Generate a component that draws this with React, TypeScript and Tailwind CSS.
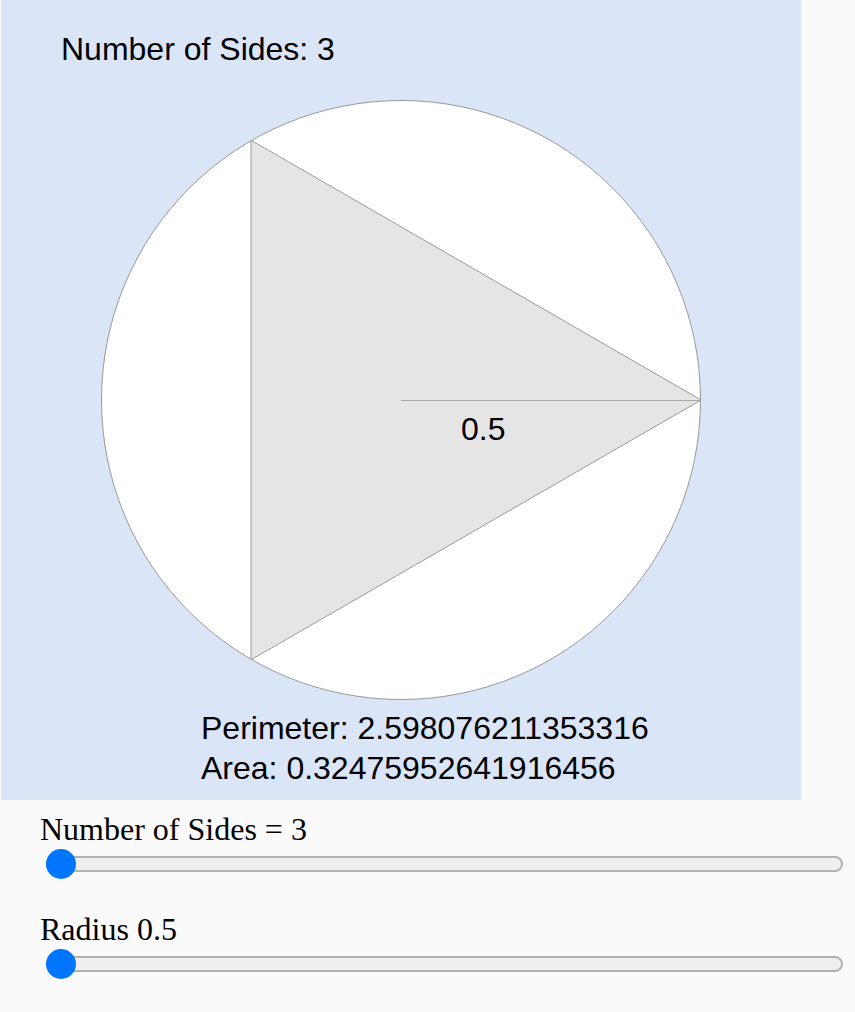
import React from 'react'

const sides = 3
const radius = 0.5
const scale = 600

const Slider: React.FC<{ label: string }> = ({ label }) => {
  return (
    <div className="mb-[32px]">
      <div className="h-[36px] text-[32px] leading-[36px] text-black">{label}</div>
      <div className="relative mt-[2px] flex h-[30px] w-[803px] items-center">
        <div className="ml-[6px] h-[16px] w-[797px] rounded-full border-2 border-[#b2b2b2] bg-[#efefef]" />
        <div className="absolute left-[6px] top-0 h-[30px] w-[30px] rounded-full bg-[#0075ff]" />
      </div>
    </div>
  )
}

export default function App() {
  const r = radius * scale
  const cx = 300
  const cy = 300
  const pts = Array.from({ length: sides }, (_, i) => {
    const a = (i * 2 * Math.PI) / sides
    return `${cx + r * Math.cos(a)},${cy - r * Math.sin(a)}`
  }).join(' ')

  // values as printed by the original page
  const perimeter = '2.598076211353316'
  const area = '0.32475952641916456'

  return (
    <div className="min-h-[1012px] w-[855px] bg-[#fafafa] font-['Liberation_Serif',serif]">
      <div className="ml-[1px] flex h-[800px] w-[800px] flex-col bg-[#dae5f8] font-['Liberation_Sans',Arial,sans-serif] text-black">
        <div className="pl-[60px] pt-[29px] text-[32px] leading-[40px]">Number of Sides: {sides}</div>
        <svg
          width="600"
          height="600"
          viewBox="0 0 600 600"
          className="ml-[100px] mt-[31px] overflow-visible"
        >
          <circle cx={cx} cy={cy} r={299.5} fill="#ffffff" stroke="#999999" strokeWidth="1" />
          <polygon points={pts} fill="#e5e5e5" stroke="#999999" strokeWidth="1" />
          <line x1={cx} y1={300.5} x2={cx + r} y2={300.5} stroke="#aaaaaa" strokeWidth="1" />
          <text
            x={360}
            y={340}
            fontSize="32"
            fill="#000000"
            fontFamily="'Liberation Sans', Arial, sans-serif"
          >
            {radius}
          </text>
        </svg>
        <div className="mt-[8px] pl-[200px] text-[32px] leading-[40px]">
          <div>Perimeter: {perimeter}</div>
          <div>Area: {area}</div>
        </div>
      </div>
      <div className="pl-[40px] pt-[11px]">
        <Slider label={`Number of Sides = ${sides}`} />
        <Slider label={`Radius ${radius}`} />
      </div>
    </div>
  )
}
